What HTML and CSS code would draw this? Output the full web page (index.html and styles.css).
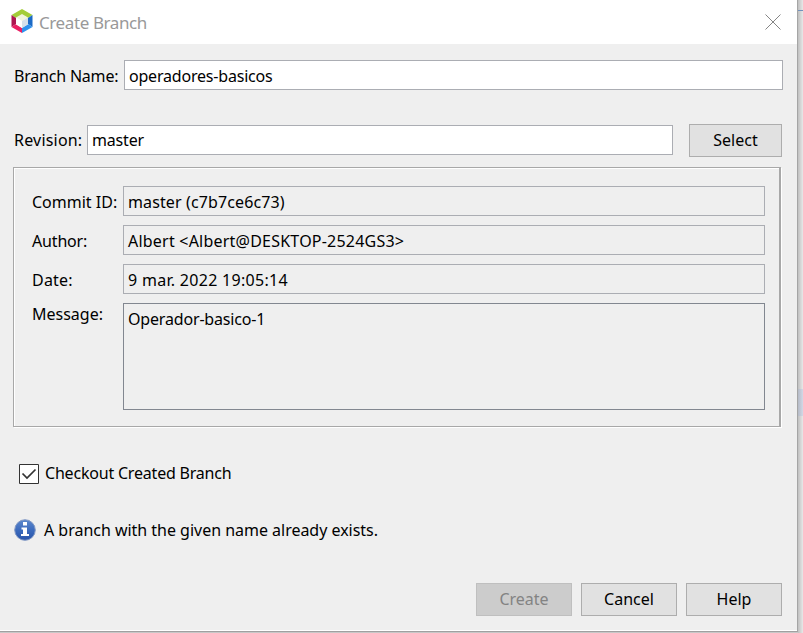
FILE: index.html
```html
<!DOCTYPE html>
<html lang="en">
<head>
<meta charset="utf-8">
<title>Create Branch</title>
<link rel="stylesheet" href="styles.css">
</head>
<body>
<main class="dialog">
  <header class="titlebar">
    <svg class="logo" width="22" height="24" viewBox="0 0 22 24">
      <path fill="#a4cd39" d="M11 0 21.500 6 17 9 11 6 5 9 .5 6Z"/>
      <path fill="#ad1650" d="M.5 6 5 9v6L.5 18Z"/>
      <path fill="#e92063" d="M.5 18 5 15l6 4v5Z"/>
      <path fill="#1b6ac6" d="M21.500 6 17 9v6l4.500 3Z"/>
      <path fill="#2f91ed" d="M21.500 18 17 15l-6 4v5Z"/>
      <path fill="#f1f5dc" d="m11 5 6 3.500-6 3.500-6-3.500Z"/>
      <path fill="#fff" d="m5 8.500 6 3.500v7l-6-3.500Z"/>
      <path fill="#d5e0ea" d="m17 8.500-6 3.500v7l6-3.500Z"/>
    </svg>
    <h1 class="title"><span class="t-title">Create Branch</span></h1>
    <svg class="close" width="16" height="16" viewBox="0 0 16 16"><path d="m.5.5 15 15m0-15-15 15" stroke="#858585" fill="none"/></svg>
  </header>
  <section class="row name-row">
    <label class="t-name">Branch Name:</label>
    <div class="field editable"><span class="t-branch">operadores-basicos</span></div>
  </section>
  <section class="row revision-row">
    <label class="t-revision">Revision:</label>
    <div class="field editable"><span class="t-master">master</span></div>
    <button class="button select"><span class="t-select">Select</span></button>
  </section>
  <section class="details">
    <label class="t-commit">Commit ID:</label>
    <div class="field"><span class="t-hash">master (c7b7ce6c73)</span></div>
    <label class="t-author">Author:</label>
    <div class="field"><span class="t-email">Albert &lt;Albert@DESKTOP-2524GS3&gt;</span></div>
    <label class="t-date">Date:</label>
    <div class="field"><span class="t-time">9 mar. 2022 19:05:14</span></div>
    <label class="message-label t-message">Message:</label>
    <div class="field message"><span class="t-op">Operador-basico-1</span></div>
  </section>
  <section class="checkout">
    <svg width="20" height="20" viewBox="0 0 20 20"><path fill="#fff" stroke="#333" d="M.5.5h19v19H.5z"/><path fill="none" stroke="#333" stroke-width="1.700" d="m3.500 9.500 4.500 4.500 8.500-8.500"/></svg>
    <span class="t-checkout">Checkout Created Branch</span>
  </section>
  <section class="notice">
    <svg width="22" height="22" viewBox="0 0 22 22">
      <defs><linearGradient id="blue" x2="0" y2="1"><stop stop-color="#5d88cc"/><stop offset=".5" stop-color="#3c6bbd"/><stop offset="1" stop-color="#2954aa"/></linearGradient></defs>
      <circle cx="11" cy="11" r="10.300" fill="url(#blue)" stroke="#8299c4"/>
      <path fill="#fff" d="M9 3h4v3.500H9zM7.500 8.500H13V15h2v2H7v-2h2v-4.500H7.500z"/>
    </svg>
    <span class="t-notice">A branch with the given name already exists.</span>
  </section>
  <footer class="actions">
    <button class="button disabled" disabled><span class="t-create">Create</span></button>
    <button class="button"><span class="t-cancel">Cancel</span></button>
    <button class="button"><span class="t-help">Help</span></button>
  </footer>
</main>
<aside class="backdrop"><div class="backdrop-line"></div><div class="backdrop-selection"></div></aside>
</body>
</html>
```
FILE: styles.css
```css
* { box-sizing: border-box; }
body {
  display: flex;
  width: 803px;
  height: 633px;
  margin: 0;
  overflow: hidden;
  background: #c8c8c8;
  color: #000;
  font: 16px/28px "Noto Sans", sans-serif;
}
.dialog {
  width: 798px;
  height: 632px;
  border-right: 1px solid #a5a5a5;
  border-bottom: 1px solid #a0a0a0;
  background: #efefef;
  box-shadow: inset 0 -1px #fff;
}
span, label { white-space: nowrap; }
.titlebar {
  display: flex;
  height: 44px;
  padding: 9px 16px 0 11px;
  background: #fff;
}
.title { margin: 0 auto 0 6px; color: #999; font-size: 17px; font-weight: 400; line-height: 27px; letter-spacing: -.4px; }
.close { margin-top: 5px; }
.row { display: flex; padding-left: 14px; }
.name-row { height: 30px; margin-top: 16px; padding-right: 14px; }
.name-row label { width: 110px; line-height: 32px; }
.field { flex: 1; height: 30px; padding-left: 4px; border: 1px solid #abadb3; line-height: 29px; }
.editable { background: #fff; }
.name-row .field { line-height: 30px; }
.revision-row { height: 33px; margin-top: 34px; padding-right: 15px; }
.revision-row label { width: 73px; line-height: 33px; }
.revision-row .field { margin-top: 1px; line-height: 28px; }
.button {
  width: 96px;
  height: 33px;
  padding: 0 0 2px;
  border: 1px solid #adadad;
  background: #e1e1e1;
  color: #000;
  font: inherit;
}
.select { width: 93px; margin-left: 16px; }
.details {
  display: grid;
  grid-template-columns: 91px 642px;
  grid-template-rows: 30px 30px 30px 107px;
  row-gap: 9px;
  width: 768px;
  height: 260px;
  margin: 10px 0 0 13px;
  padding: 18px 0 0 18px;
  border: 1px solid #a8a8a8;
  border-right-width: 2px;
  box-shadow: inset 1px 1px #fff, 1px 1px #fff;
}
.details label { line-height: 32px; }
.details .field { line-height: 30px; }
.details .message-label { line-height: 22px; }
.details .message { height: 107px; border-color: #828790; line-height: 31px; }
.checkout { display: flex; margin: 37px 0 0 19px; line-height: 18px; height: 20px; }
.checkout span { margin-left: 6px; }
.notice { display: flex; height: 22px; margin: 35px 0 0 14px; line-height: 23px; }
.notice span { margin-left: 8px; }
.actions { display: flex; gap: 9px; margin: 42px 0 0 476px; }
.disabled { border-color: #bfbfbf; background: #ccc; color: #838383; }
.backdrop { width: 5px; height: 633px; background: linear-gradient(90deg, #c0c0c0, #e8e8e8); }
.backdrop-line { height: 11px; border-bottom: 1px solid #7191bd; }
.backdrop-selection { height: 27px; margin-top: 378px; background: linear-gradient(90deg, #b5bac6, #d2d9e7); }

/* Tracking for individual labels and values */
.t-name, .t-branch, .t-checkout { letter-spacing: -.2px; }
.t-revision { letter-spacing: .2px; }
.t-master, .t-op, .t-author { letter-spacing: -.17px; }
.t-hash { letter-spacing: .12px; }
.t-email { letter-spacing: .22px; }
.t-time { letter-spacing: .3px; }
.t-date { letter-spacing: .2px; }
.t-notice { letter-spacing: -.02px; }
```
